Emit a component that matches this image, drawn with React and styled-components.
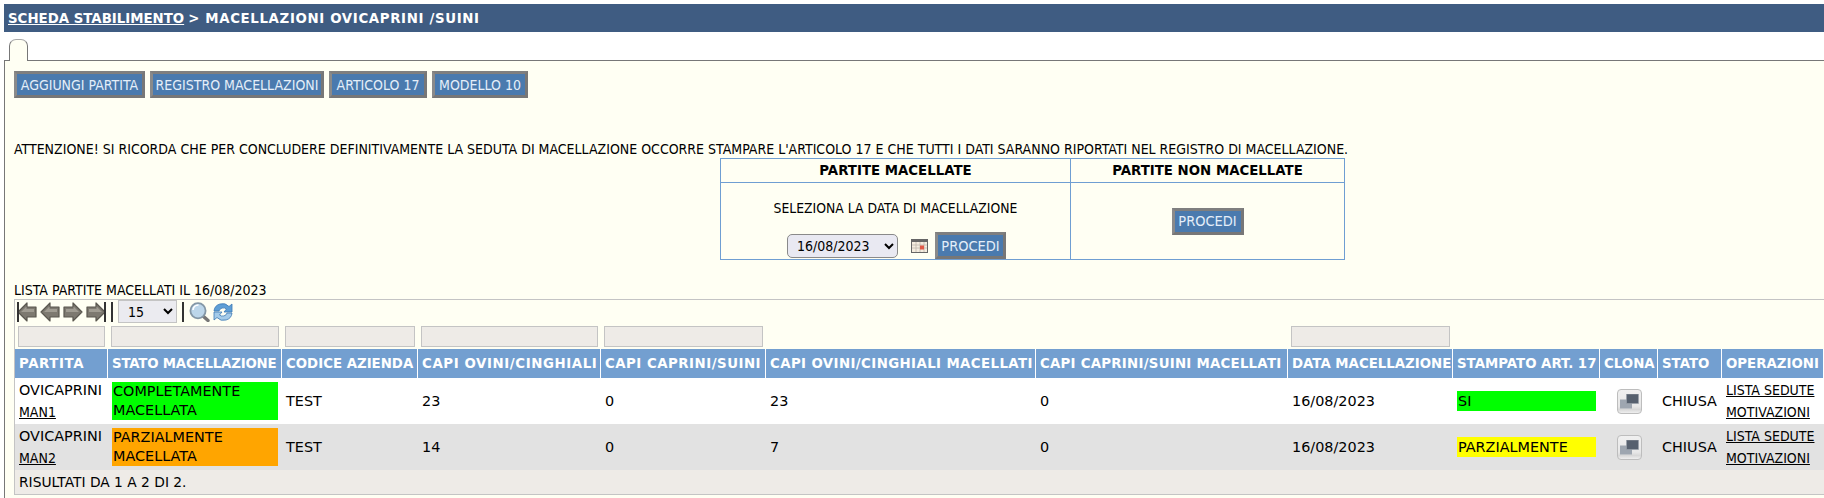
import React from "react";
import styled, { createGlobalStyle } from "styled-components";

const Global = createGlobalStyle`
  html, body { margin: 0; padding: 0; background: #fff; overflow: hidden; }
  body { font-family: "DejaVu Sans Condensed", "DejaVu Sans", sans-serif; font-size: 14px; color: #000; }
`;
const Page = styled.div`width: 1824px; height: 498px; padding-top: 4px; box-sizing: border-box; overflow: hidden;`;
const TitleBar = styled.div`
  margin-left: 4px; height: 28px; background: #3f5c82; color: #fff; font-family: "DejaVu Sans", sans-serif; font-weight: 700; font-size: 13.33px;
  display: flex; align-items: center; padding-left: 4px; gap: 4px; white-space: nowrap;
  a { color: #fff; text-decoration: underline; }
  span { letter-spacing: 0.65px; }
`;
const TabStrip = styled.div`height: 28px; padding: 7px 0 0 9px; box-sizing: border-box;`;
const Tab = styled.div`
  width: 19px; height: 22px; box-sizing: border-box; border: 1px solid #777; border-bottom: 0;
  border-radius: 7px 7px 0 0; background: #fffff3; position: relative; z-index: 1;
  border-top-color: #aaa;
`;
const Panel = styled.div`
  margin-left: 4px; height: 438px; box-sizing: border-box; border-left: 1px solid #777; border-top: 1px solid #777;
  background: #fffff3; padding: 10px 0 0 9px;
`;
const ButtonRow = styled.div`display: flex; gap: 5px; height: 27px;`;
const Btn = styled.button`
  font: inherit; font-size: ${p => p.$fs || 14}px; color: #e4eef9; background: #4a7aae; height: 27px; padding: 0;
  width: ${p => p.$w}px; box-sizing: border-box; border: 3px solid; border-color: #7f7f7f #777 #777 #8a8a8a;
  white-space: nowrap; border-radius: 0;
`;
const Warning = styled.div`margin-top: 43px; height: 16px; line-height: 16px; white-space: nowrap;`;
const BoxTable = styled.table`
  width: 624px; margin: 1px 0 0 706px; border-collapse: collapse; table-layout: fixed;
  th, td { border: 1px solid #6f9ed2; text-align: center; padding: 0; }
  th { height: 23px; font-family: "DejaVu Sans", sans-serif; font-size: 13.33px; font-weight: 700; }
`;
const Pick = styled.div`display: flex; flex-direction: column; align-items: center; height: 76px; justify-content: space-between;`;
const PickLabel = styled.div`margin-top: 17px; line-height: 16px; font-size: 13.8px;`;
const PickRow = styled.div`display: flex; align-items: center; margin-left: 2px;`;
const DateSelect = styled.select`
  width: 111px; height: 24px; font: inherit; font-size: 14px; font-family: "DejaVu Sans Condensed", sans-serif; border: 1px solid #8a8a8a; border-radius: 5px;
  background-color: #e9e9f2; padding: 0 0 0 5px; margin-right: 13px; color: #000;
`;
const ListTitle = styled.div`margin-top: 22px; height: 16px; line-height: 16px;`;
const Grid = styled.div`
  margin-top: 1px; border: 1px solid #c4c4c4; border-right: 0; height: 196px; box-sizing: border-box;
  display: flex; flex-direction: column;
`;
const Toolbar = styled.div`display: flex; align-items: center; height: 23px; padding-left: 2px; flex: none;`;
const IconBtn = styled.svg`display: block; flex: none; margin-right: ${p => p.$mr ?? 3}px;`;
const Sep = styled.div`width: 2px; height: 20px; background: #333; margin: 0 ${p => p.$r}px 0 ${p => p.$l}px; flex: none;`;
const PageSelect = styled.select`
  width: 59px; height: 23px; border: 1px solid #c4c4c4; border-radius: 0; background-color: #ebebf0; font-family: "DejaVu Sans Condensed", sans-serif; font-size: 14px;
  padding: 0 0 0 5px; color: #000;
`;
const Table = styled.table`
  width: 1809px; border-collapse: separate; border-spacing: 0; table-layout: fixed; flex: none;
`;
const FilterCell = styled.th`height: 26px; padding: 1px 3px; box-sizing: border-box; font-weight: 400;`;
const FilterBox = styled.div`height: 21px; box-sizing: border-box; border: 1px solid #c4c4c4; background: #eeebe7;`;
const Head = styled.th`
  background: #739fd0; color: #fff; height: 29px; box-sizing: border-box; text-align: left; padding: 0 0 0 4px; border-right: 1px solid #fff;
  font-size: 13.33px; font-weight: 700; white-space: nowrap; overflow: hidden;
  font-family: "DejaVu Sans", sans-serif; letter-spacing: ${p => p.$ls || 0}px;
`;
const Row = styled.tr`background: ${p => (p.$alt ? "#e2e2e2" : "#fff")};`;
const Cell = styled.td`
  height: 46px; box-sizing: border-box; padding: 0 4px; font-size: 14.4px; line-height: 22px; white-space: nowrap;
  font-family: "DejaVu Sans", sans-serif;
`;
const Link = styled.a`color: #000; text-decoration: underline; font-family: "DejaVu Sans Condensed", sans-serif; font-size: 14px;`;
const Stack = styled.div`display: flex; flex-direction: column;`;
const Status = styled.div`background: ${p => p.$c}; height: 38px; line-height: 19px; white-space: normal; padding-left: 1px;`;
const Flag = styled.div`background: ${p => p.$c}; height: 20px; line-height: 20px; padding-left: 1px;`;
const Footer = styled.div`background: #eeebe7; height: 25px; line-height: 24px; padding-left: 4px; border-bottom: 1px solid #c4c4c4; box-sizing: border-box; font-family: "DejaVu Sans", sans-serif; font-size: 13.8px;`;
const CloneBox = styled.div`
  width: 25px; height: 25px; margin-left: 13px; box-sizing: border-box; border: 1px solid #bdbdbd; border-radius: 4px;
  background: linear-gradient(#f0f0f0, #e8e8e8 70%, #d8d8d8 85%, #efefef); display: flex; align-items: center; justify-content: center;
`;

const Nav = ({ dir, bar }) => {
  const pts = dir === "l"
    ? "1,10 10,1 10,5 19,5 19,15 10,15 10,19"
    : "19,10 10,1 10,5 1,5 1,15 10,15 10,19";
  return (
    <IconBtn width="20" height="20" viewBox="0 0 20 20" $mr={3}>
      <polygon points={pts} fill="#7d7970" stroke="#5a574f" strokeWidth="1.2" strokeLinejoin="round" />
      <polygon points={dir === "l" ? "4,10 9.500,4.500 9.500,7 17,7 17,10" : "16,10 10.500,4.500 10.500,7 3,7 3,10"} fill="#a09c92" />
      {bar && <rect x={bar === "l" ? 0 : 18} y="0" width="2" height="20" fill="#333" />}
    </IconBtn>
  );
};
const Search = () => (
  <IconBtn width="21" height="20" viewBox="0 0 21 20" $mr={3}>
    <line x1="14" y1="14" x2="19" y2="18.500" stroke="#777" strokeWidth="3.400" strokeLinecap="round" />
    <circle cx="9" cy="8.800" r="7.600" fill="#bcd6ea" stroke="#8497a6" strokeWidth="1.800" />
    <path d="M4 8a5.500 5.500 0 0 1 5.500-5" stroke="#fff" strokeWidth="1.600" fill="none" />
  </IconBtn>
);
const Refresh = () => (
  <IconBtn width="20" height="20" viewBox="0 0 20 20" $mr={0}>
    <path d="M1 9a8.500 8 0 0 1 15-4.500L19 2v8h-8l2.500-3a4.500 4 0 0 0-7.500 2z" fill="#5f9fd6" stroke="#3c78b4" strokeWidth=".8" />
    <path d="M19 11a8.500 8 0 0 1-15 4.500L1 18v-8h8l-2.500 3a4.500 4 0 0 0 7.500-2z" fill="#a4cbe9" stroke="#3c78b4" strokeWidth=".8" />
  </IconBtn>
);
const Calendar = () => (
  <IconBtn width="17" height="14" viewBox="0 0 17 14" $mr={7}>
    <rect x=".5" y=".5" width="16" height="13" fill="#f4ecdf" stroke="#666" />
    <rect x="1" y="1" width="15" height="2" fill="#666" />
    <path d="M1 6h15M1 9h15M5 3v10M9 3v10M13 3v10" stroke="#bfb8ac" strokeWidth=".8" />
    <rect x="9" y="6.500" width="4" height="4" fill="#e05a48" />
  </IconBtn>
);
const Clone = () => (
  <CloneBox>
    <svg width="19" height="15" viewBox="0 0 19 15">
      <rect x="0" y="5.500" width="12" height="9" fill="#9ea6b0" />
      <rect x="6.500" y="0" width="12" height="9.500" fill="#56606e" stroke="#9aa1aa" strokeWidth=".7" />
    </svg>
  </CloneBox>
);

const widths = [93, 174, 136, 183, 165, 270, 252, 165, 147, 58, 64, 102];
const heads = [
  ["PARTITA", 0.6], ["STATO MACELLAZIONE", -0.2], ["CODICE AZIENDA", 0], ["CAPI OVINI/CINGHIALI", 0.6],
  ["CAPI CAPRINI/SUINI", 0.5], ["CAPI OVINI/CINGHIALI MACELLATI", 0.4], ["CAPI CAPRINI/SUINI MACELLATI", 0.25],
  ["DATA MACELLAZIONE", 0], ["STAMPATO ART. 17", 0], ["CLONA", 0], ["STATO", 0], ["OPERAZIONI", 0],
];
const filters = [1, 1, 1, 1, 1, 0, 0, 1, 0, 0, 0, 0];
const rows = [
  { id: "MAN1", stato: "COMPLETAMENTE MACELLATA", sc: "#00ff00", a: "23", b: "0", c: "23", d: "0", st: "SI", fc: "#00ff00" },
  { id: "MAN2", stato: "PARZIALMENTE MACELLATA", sc: "#ffa500", a: "14", b: "0", c: "7", d: "0", st: "PARZIALMENTE", fc: "#ffff00", alt: true },
];

export default function App() {
  return (
    <Page>
      <Global />
      <TitleBar><a href="#s">SCHEDA STABILIMENTO</a><span>&gt; MACELLAZIONI OVICAPRINI /SUINI</span></TitleBar>
      <TabStrip><Tab /></TabStrip>
      <Panel>
        <ButtonRow>
          <Btn $w={131}>AGGIUNGI PARTITA</Btn>
          <Btn $w={174}>REGISTRO MACELLAZIONI</Btn>
          <Btn $w={98}>ARTICOLO 17</Btn>
          <Btn $w={96}>MODELLO 10</Btn>
        </ButtonRow>
        <Warning>ATTENZIONE! SI RICORDA CHE PER CONCLUDERE DEFINITIVAMENTE LA SEDUTA DI MACELLAZIONE OCCORRE STAMPARE L'ARTICOLO 17 E CHE TUTTI I DATI SARANNO RIPORTATI NEL REGISTRO DI MACELLAZIONE.</Warning>
        <BoxTable>
          <colgroup><col width="350" /><col width="274" /></colgroup>
          <thead><tr><th>PARTITE MACELLATE</th><th>PARTITE NON MACELLATE</th></tr></thead>
          <tbody>
            <tr>
              <td>
                <Pick>
                  <PickLabel>SELEZIONA LA DATA DI MACELLAZIONE</PickLabel>
                  <PickRow>
                    <DateSelect defaultValue="16/08/2023"><option>16/08/2023</option></DateSelect>
                    <Calendar />
                    <Btn $w={71} $fs={14.5}>PROCEDI</Btn>
                  </PickRow>
                </Pick>
              </td>
              <td><Btn $w={72} $fs={14.5}>PROCEDI</Btn></td>
            </tr>
          </tbody>
        </BoxTable>
        <ListTitle>LISTA PARTITE MACELLATI IL 16/08/2023</ListTitle>
        <Grid>
          <Toolbar>
            <Nav dir="l" bar="l" /><Nav dir="l" /><Nav dir="r" /><Nav dir="r" bar="r" />
            <Sep $l={2} $r={5} />
            <PageSelect defaultValue="15"><option>15</option></PageSelect>
            <Sep $l={5} $r={5} />
            <Search /><Refresh />
          </Toolbar>
          <Table>
            <colgroup>{widths.map((w, i) => <col key={i} width={w} />)}</colgroup>
            <thead>
              <tr>{filters.map((f, i) => <FilterCell key={i}>{f ? <FilterBox /> : null}</FilterCell>)}</tr>
              <tr>{heads.map(([h, ls]) => <Head key={h} $ls={ls}>{h}</Head>)}</tr>
            </thead>
            <tbody>
              {rows.map(r => (
                <Row key={r.id} $alt={r.alt}>
                  <Cell><Stack><span>OVICAPRINI</span><Link href="#m">{r.id}</Link></Stack></Cell>
                  <Cell><Status $c={r.sc}>{r.stato}</Status></Cell>
                  <Cell>TEST</Cell>
                  <Cell>{r.a}</Cell>
                  <Cell>{r.b}</Cell>
                  <Cell>{r.c}</Cell>
                  <Cell>{r.d}</Cell>
                  <Cell>16/08/2023</Cell>
                  <Cell><Flag $c={r.fc}>{r.st}</Flag></Cell>
                  <Cell><Clone /></Cell>
                  <Cell>CHIUSA</Cell>
                  <Cell><Stack><Link href="#l">LISTA SEDUTE</Link><Link href="#v">MOTIVAZIONI</Link></Stack></Cell>
                </Row>
              ))}
            </tbody>
          </Table>
          <Footer>RISULTATI DA 1 A 2 DI 2.</Footer>
        </Grid>
      </Panel>
    </Page>
  );
}
